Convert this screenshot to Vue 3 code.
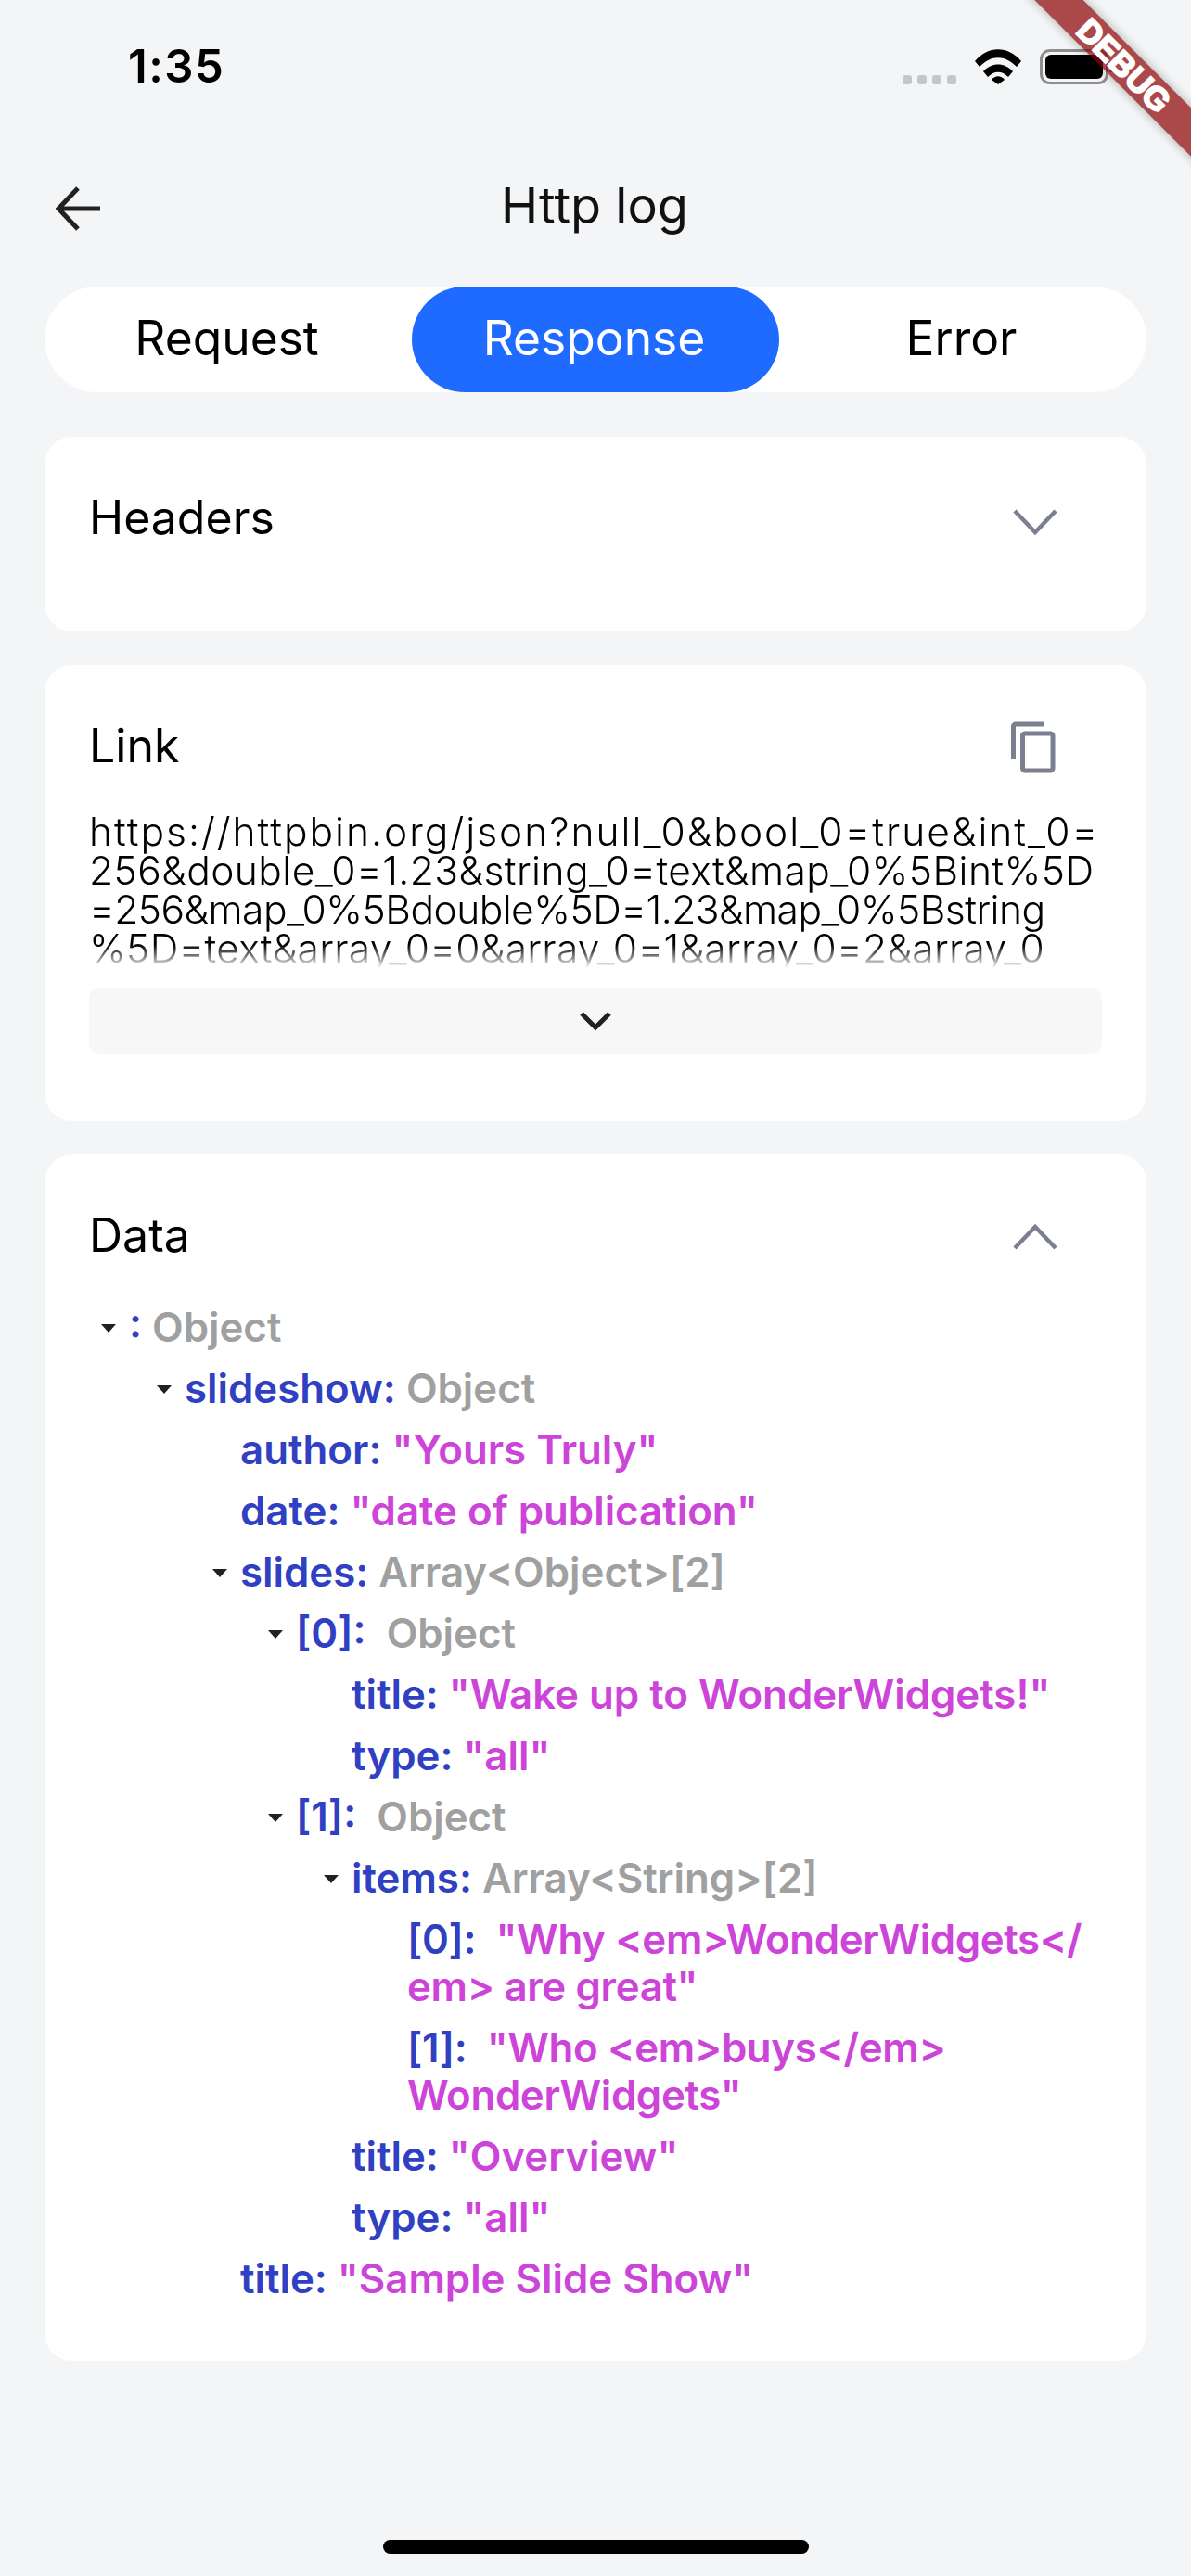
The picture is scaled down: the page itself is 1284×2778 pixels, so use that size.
<script setup>
const linkLines = [
  { text: 'https://httpbin.org/json?null_0&bool_0=true&int_0=', spacing: 2.0 },
  { text: '256&double_0=1.23&string_0=text&map_0%5Bint%5D', spacing: 0.44 },
  { text: '=256&map_0%5Bdouble%5D=1.23&map_0%5Bstring', spacing: -0.52 },
  { text: '%5D=text&array_0=0&array_0=1&array_0=2&array_0', spacing: 0.3 }
]
const rows = [
  { d: 0, open: true, k: ':', t: 'Object' },
  { d: 1, open: true, k: 'slideshow:', t: 'Object' },
  { d: 2, k: 'author:', v: '"Yours Truly"' },
  { d: 2, k: 'date:', v: '"date of publication"' },
  { d: 2, open: true, k: 'slides:', t: 'Array<Object>[2]' },
  { d: 3, open: true, k: '[0]:', t: ' Object' },
  { d: 4, k: 'title:', v: '"Wake up to WonderWidgets!"' },
  { d: 4, k: 'type:', v: '"all"' },
  { d: 3, open: true, k: '[1]:', t: ' Object' },
  { d: 4, open: true, k: 'items:', t: 'Array<String>[2]' },
  { d: 5, k: '[0]:', v: ' "Why <em>WonderWidgets</\nem> are great"', ls: -0.35 },
  { d: 5, k: '[1]:', v: ' "Who <em>buys</em>\nWonderWidgets"', ls: -0.35 },
  { d: 4, k: 'title:', v: '"Overview"' },
  { d: 4, k: 'type:', v: '"all"' },
  { d: 2, k: 'title:', v: '"Sample Slide Show"' }
]
</script>

<template>
  <div class="screen">
    <div class="banner"><span>DEBUG</span></div>

    <header class="status">
      <span class="time">1:35</span>
      <div class="status-icons">
        <div class="dots"><i></i><i></i><i></i><i></i></div>
        <svg class="wifi" viewBox="0 0 50 38" width="50" height="38">
          <path d="M0 13 C14 -4 36 -4 50 13 L45 19 C32 6 18 6 5 19 Z" fill="#000" />
          <path d="M9 24 C18 14 32 14 41 24 L36 30 C29 23 21 23 14 30 Z" fill="#000" />
          <path d="M18 33 C22 28 28 28 32 33 L25 38 Z" fill="#000" />
        </svg>
        <div class="battery"><div class="battery-fill"></div></div>
      </div>
    </header>

    <div class="appbar">
      <svg class="back" viewBox="0 0 50 48" width="50" height="48">
        <path d="M24 2 L3 24 L24 46 M3 24 H48" fill="none" stroke="#212121" stroke-width="5" />
      </svg>
      <h1 class="title">Http log</h1>
    </div>

    <nav class="tabs">
      <div class="tab">Request</div>
      <div class="tab active">Response</div>
      <div class="tab">Error</div>
    </nav>

    <section class="card headers-card">
      <div class="card-head">
        <span class="card-title">Headers</span>
        <svg class="icon icon-down" viewBox="0 0 48 28" width="48" height="28">
          <path d="M2 2 L24 25 L46 2" fill="none" stroke="#7c7f90" stroke-width="4.5" />
        </svg>
      </div>
    </section>

    <section class="card link-card">
      <div class="card-head">
        <span class="card-title">Link</span>
        <svg class="copy" viewBox="0 0 24 24" width="60" height="60">
          <path fill="#7c7f90" d="M16 1H4c-1.1 0-2 .9-2 2v14h2V3h12V1zm3 4H8c-1.1 0-2 .9-2 2v14c0 1.1.9 2 2 2h11c1.1 0 2-.9 2-2V7c0-1.1-.9-2-2-2zm0 16H8V7h11v14z" />
        </svg>
      </div>
      <div class="link-text">
        <div v-for="line in linkLines" :key="line.text" :style="{ letterSpacing: line.spacing + 'px' }">{{ line.text }}</div>
      </div>
      <div class="expand">
        <svg viewBox="0 0 36 22" width="36" height="22">
          <path d="M3 3 L18 18 L33 3" fill="none" stroke="#212121" stroke-width="5" />
        </svg>
      </div>
    </section>

    <section class="card data-card">
      <div class="card-head">
        <span class="card-title">Data</span>
        <svg class="icon" viewBox="0 0 48 28" width="48" height="28">
          <path d="M2 26 L24 3 L46 26" fill="none" stroke="#7c7f90" stroke-width="4.5" />
        </svg>
      </div>
      <div class="tree">
        <div
          v-for="(r, i) in rows"
          :key="i"
          class="row"
          :style="{ paddingLeft: r.d * 60 + 'px', letterSpacing: (r.ls || 0) + 'px' }"
        >
          <span class="arrow-slot"><i v-if="r.open" class="arrow"></i></span>
          <span class="text"><span class="key">{{ r.k }}</span> <span v-if="r.t" class="type">{{ r.t }}</span><span v-if="r.v" class="value">{{ r.v }}</span></span>
        </div>
      </div>
    </section>

    <div class="home"></div>
  </div>
</template>

<style>
html, body { margin: 0; background: #f4f5f7; }
</style>

<style scoped>
.screen {
  position: relative;
  width: 1284px;
  height: 2778px;
  overflow: hidden;
  background: #f4f5f7;
  display: flex;
  flex-direction: column;
  font-family: Inter, "Liberation Sans", sans-serif;
  color: #000;
}
.banner {
  position: absolute;
  left: 1062px;
  top: 52px;
  width: 300px;
  height: 37px;
  transform: rotate(45deg);
  background: rgba(140, 0, 0, 0.7);
  box-shadow: 0 0 12px rgba(0, 0, 0, 0.3);
  display: flex;
  align-items: center;
  justify-content: center;
  z-index: 2;
}
.banner span {
  color: #fff;
  font-family: "Liberation Sans", sans-serif;
  font-weight: 700;
  font-size: 35px;
  -webkit-text-stroke: 2px #fff;
}
.status {
  height: 102px;
  box-sizing: border-box;
  padding: 53px 0 0 138px;
  display: flex;
  justify-content: space-between;
  align-items: flex-start;
}
.time {
  font-size: 49px;
  font-weight: 600;
  line-height: 38px;
  letter-spacing: 1.5px;
}
.status-icons {
  display: flex;
  align-items: flex-end;
  margin-right: 89px;
}
.dots { display: flex; gap: 6px; margin-right: 20px; }
.dots i { width: 10px; height: 10px; border-radius: 3px; background: #c5c6c8; }
.wifi { display: block; margin-right: 20px; }
.battery {
  position: relative;
  width: 74px;
  height: 38px;
  box-sizing: border-box;
  border: 3px solid #8e8e8e;
  border-radius: 11px;
  padding: 3px;
}
.battery::after {
  content: "";
  position: absolute;
  right: -8px;
  top: 10px;
  width: 4px;
  height: 12px;
  background: #8e8e8e;
  border-radius: 0 3px 3px 0;
}
.battery-fill { width: 100%; height: 100%; background: #000; border-radius: 6px; }
.appbar {
  position: relative;
  height: 207px;
  box-sizing: border-box;
  padding: 90px 0 51px 60px;
  display: flex;
  align-items: center;
}
.back { display: block; }
.title {
  position: absolute;
  left: 0;
  right: 2px;
  top: 87px;
  margin: 0;
  text-align: center;
  font-size: 54px;
  font-weight: 400;
  line-height: 66px;
  color: #111;
}
.tabs {
  margin: 0 48px 48px;
  height: 114px;
  flex: none;
  background: #fff;
  border-radius: 57px;
  display: grid;
  grid-template-columns: repeat(3, 1fr);
}
.tab {
  display: flex;
  align-items: center;
  justify-content: center;
  font-size: 51.5px;
  padding: 0 3px 4px 0;
  box-sizing: border-box;
  border-radius: 57px;
}
.tab.active { background: #1f6bff; color: #fff; }
.card {
  margin: 0 48px 36px;
  padding: 48px;
  background: #fff;
  border-radius: 30px;
  flex: none;
}
.card-head {
  height: 82px;
  display: flex;
  align-items: center;
  justify-content: space-between;
}
.card-title { font-size: 50px; font-weight: 400; line-height: 76px; padding-bottom: 4px; }
.icon { display: block; margin-right: 48px; }
.icon-down { margin-top: 6px; }
.copy { display: block; margin-right: 43px; }
.headers-card { height: 210px; box-sizing: border-box; }
.link-card { padding-bottom: 72px; }
.link-text {
  margin-top: 29px;
  height: 168px;
  overflow: hidden;
  font-size: 42.5px;
  line-height: 42px;
  font-weight: 300;
  white-space: nowrap;
  -webkit-mask-image: linear-gradient(to bottom, #000 85%, transparent 100%);
  mask-image: linear-gradient(to bottom, #000 85%, transparent 100%);
}
.expand {
  margin-top: 21px;
  height: 72px;
  background: #f7f7f8;
  border-radius: 12px;
  display: flex;
  align-items: center;
  justify-content: center;
}
.data-card { padding-bottom: 56px; }
.tree { margin-top: 23px; padding-left: 13px; }
.row {
  display: flex;
  align-items: flex-start;
  padding-top: 7.5px;
  padding-bottom: 7.5px;
  font-size: 43.8px;
  line-height: 51px;
  font-weight: 600;
}
.arrow-slot { width: 30px; height: 51px; flex: none; display: flex; align-items: center; }
.arrow {
  width: 0;
  height: 0;
  margin-top: 3px;
  border-left: 8px solid transparent;
  border-right: 8px solid transparent;
  border-top: 9px solid #212121;
}
.text { white-space: pre-wrap; }
.key { color: #2f41c2; }
.type { color: #a0a0a0; }
.value { color: #cc44d8; }
.home {
  position: absolute;
  left: 413px;
  top: 2739px;
  width: 459px;
  height: 15px;
  background: #000;
  border-radius: 8px;
}
</style>
